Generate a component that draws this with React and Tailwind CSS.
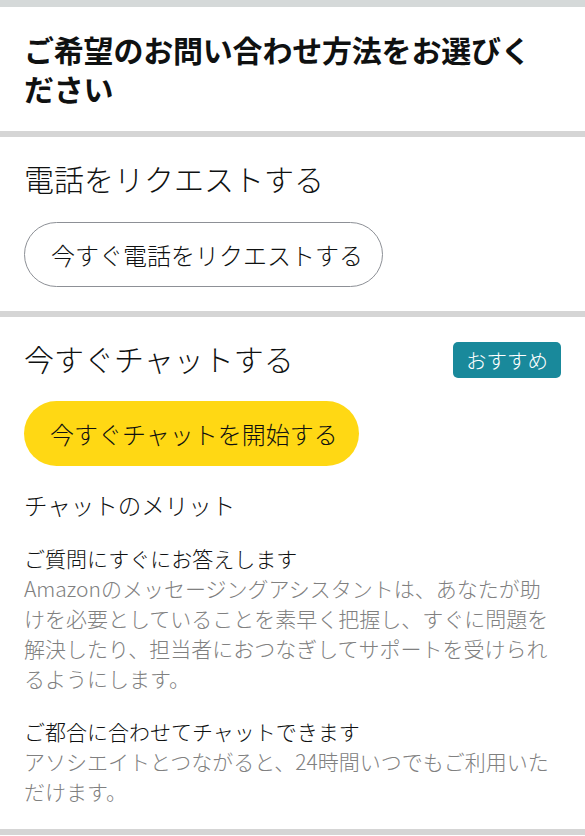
export default function App() {
  const font = { fontFamily: '"Noto Sans CJK JP", "Noto Sans", sans-serif' };
  return (
    <div className="w-[585px] min-h-[836px] bg-white text-[#0f1111]" style={font}>
      <div className="h-[7px] bg-[#d5d9d9]" />
      <div className="px-6 pt-[23px] pb-[23px]">
        <h1 className="text-[30px] leading-[39px] font-bold tracking-[-0.2px]">
          ご希望のお問い合わせ方法をお選びく
          <br />
          ださい
        </h1>
      </div>
      <div className="h-[6px] bg-[#d5d5d5]" />
      <div className="px-6 pt-[21px] pb-[24px] font-light">
        <h2 className="text-[30px] leading-[40px]">電話をリクエストする</h2>
        <button className="mt-[24px] h-[65px] w-[359px] rounded-full border border-[#8d9096] bg-white pl-[26px] text-left text-[24px] text-[#0f1111] font-light">
          今すぐ電話をリクエストする
        </button>
      </div>
      <div className="h-[6px] bg-[#d5d5d5]" />
      <div className="px-6 pt-[21px] pb-[23px] font-light">
        <div className="flex h-[40px] items-center justify-between">
          <h2 className="text-[30px] leading-[40px]">今すぐチャットする</h2>
          <span className="mt-[4px] flex h-[36px] items-center rounded-[5px] bg-[#19899b] px-[13px] text-[20.5px] text-white">
            おすすめ
          </span>
        </div>
        <button className="mt-[23px] h-[65px] w-[335px] rounded-full bg-[#ffd814] pl-[26px] text-left text-[24px] text-[#0f1111] font-light">
          今すぐチャットを開始する
        </button>
        <p className="mt-[22px] text-[23.5px] leading-[34px]">チャットのメリット</p>
        <div className="mt-[21px] text-[21px] leading-[30px]">
          <p>ご質問にすぐにお答えします</p>
          <p className="text-[#808080]">
            Amazonのメッセージングアシスタントは、あなたが助けを必要としていることを素早く把握し、すぐに問題を解決したり、担当者におつなぎしてサポートを受けられるようにします。
          </p>
          <p className="mt-[23px]">ご都合に合わせてチャットできます</p>
          <p className="text-[#808080]">
            アソシエイトとつながると、24時間いつでもご利用いただけます。
          </p>
        </div>
      </div>
      <div className="h-[6px] bg-[#d5d5d5]" />
    </div>
  );
}
